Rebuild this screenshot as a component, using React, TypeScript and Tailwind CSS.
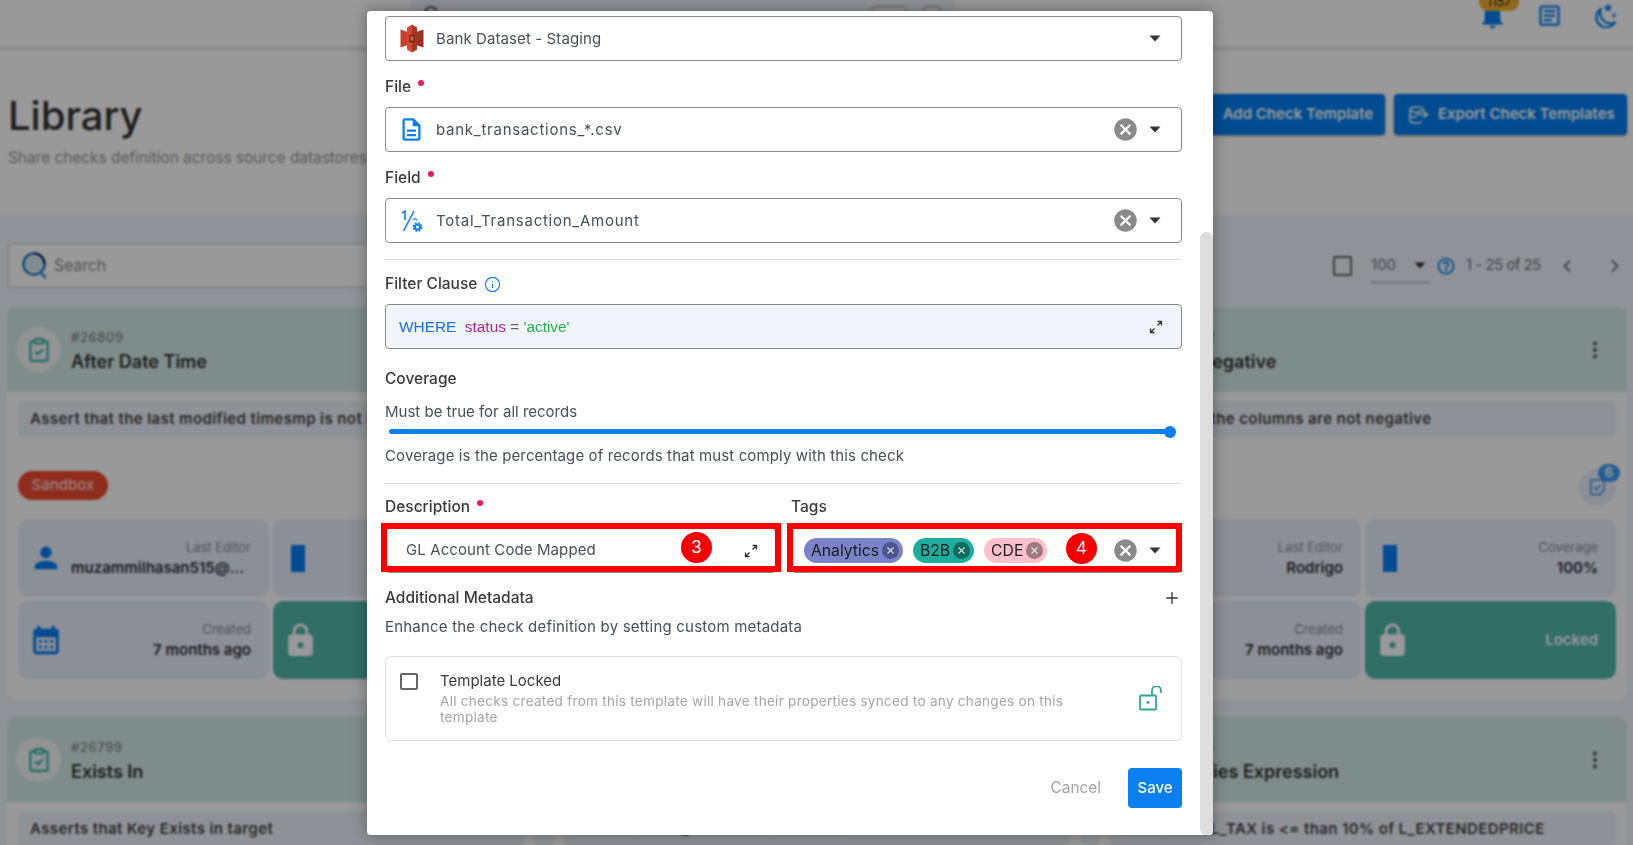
import React from "react";
import { ClipboardCheck, ChevronLeft, ChevronRight, Info, Plus, EllipsisVertical, X } from "lucide-react";
import { MdPerson, MdCalendarMonth, MdLock, MdNotifications, MdOutlineArticle, MdHelpOutline, MdCancel, MdOutlineDescription } from "react-icons/md";

function Caret({ className = "" }: { className?: string }) {
  return (
    <svg width="12" height="7" viewBox="0 0 12 7" className={className}>
      <polygon points="0.5,0.5 11.5,0.5 6,6.5" fill="currentColor" />
    </svg>
  );
}

function ExpandIcon() {
  return (
    <svg width="14" height="14" viewBox="0 0 14 14" fill="none" stroke="#333" strokeWidth="1.3">
      <path d="M8.5 1.5H12.5V5.5M12.5 1.5L8.5 5.5" />
      <path d="M5.5 12.5H1.5V8.5M1.5 12.5L5.5 8.5" />
    </svg>
  );
}

function S3Icon() {
  return (
    <svg width="24" height="29" viewBox="0 0 24 29">
      <polygon points="0.5,5.5 8,8 8,21 0.5,23.5" fill="#c8402c" />
      <polygon points="23.5,5.5 16,8 16,21 23.5,23.5" fill="#9c3322" />
      <polygon points="12,0.5 7,3.5 7,25.5 12,28.5" fill="#d44a32" />
      <polygon points="12,0.5 17,3.5 17,25.5 12,28.5" fill="#a9361f" />
      <polygon points="9,10.5 15,10.5 15,18.5 9,18.5" fill="#7a2a1a" />
      <polygon points="10.5,12.5 13.5,12.5 13.5,16.5 10.5,16.5" fill="#e05a40" />
    </svg>
  );
}

function FieldIcon() {
  return (
    <svg width="22" height="22" viewBox="0 0 22 22" fill="none" stroke="#0a7ff0" strokeWidth="1.6">
      <path d="M1 3.2L4 1.2V10" />
      <path d="M13 1L2.5 21" />
      <path d="M12 9.5C13 8.5 15.5 8.5 16 10.5" strokeWidth="1.2" />
      <circle cx="16.5" cy="17" r="2.6" strokeWidth="2" />
      <circle cx="16.5" cy="17" r="4.2" strokeWidth="1.4" strokeDasharray="2 1.3" />
    </svg>
  );
}

function MoonIcon() {
  return (
    <svg width="26" height="26" viewBox="0 0 26 26" fill="none">
      <path d="M9 7A10 10 0 1 0 23 20.5A10.5 10.5 0 0 1 9 7Z" stroke="#007df2" strokeWidth="2.2" strokeLinejoin="round" />
      <polygon points="16,1 17.2,4.3 20.6,4.4 17.9,6.5 18.8,9.8 16,7.9 13.2,9.8 14.1,6.5 11.4,4.4 14.8,4.3" fill="#007df2" />
      <polygon points="22,10.5 22.7,12.4 24.7,12.5 23.1,13.7 23.7,15.6 22,14.5 20.3,15.6 20.9,13.7 19.3,12.5 21.3,12.4" fill="#007df2" />
    </svg>
  );
}

function ExportIcon() {
  return (
    <svg width="20" height="18" viewBox="0 0 20 18" fill="none" stroke="white" strokeWidth="1.6">
      <ellipse cx="7.5" cy="3.5" rx="6.5" ry="2.5" />
      <path d="M1 3.5V14.5C1 16 4 17 7.5 17C10 17 12 16.5 13 15.5" />
      <path d="M1 9C1 10.5 4 11.5 7.5 11.5" />
      <path d="M6 8.5H18M14.5 5L18.5 8.5L14.5 12" />
    </svg>
  );
}

function SearchLogo() {
  return (
    <svg width="26" height="27" viewBox="0 0 26 27" fill="none">
      <circle cx="12" cy="12" r="7.5" fill="#d5e6f5" />
      <path d="M12 1.5A10.5 10.5 0 0 1 22.5 12" stroke="#062f5e" strokeWidth="2.6" />
      <path d="M22.5 12A10.5 10.5 0 1 1 12 1.5" stroke="#1f7ccc" strokeWidth="2.6" />
      <path d="M18 20L23 25" stroke="#4a97d8" strokeWidth="3" strokeLinecap="round" />
    </svg>
  );
}

function Tile({ icon, label, value }: { icon: React.ReactNode; label: string; value: string }) {
  return (
    <div className="h-[78px] min-w-0 rounded-[10px] bg-[#e8effb] pl-[13px] pr-[18px] flex items-center justify-between gap-[8px]">
      <div className="shrink-0 flex items-center">{icon}</div>
      <div className="min-w-0 text-right">
        <div className="text-[13px] leading-[20px] text-[#8b8f96]">{label}</div>
        <div className="text-[15px] leading-[22px] font-semibold text-[#333] truncate">{value}</div>
      </div>
    </div>
  );
}

const coverageIcon = <div className="w-[14px] h-[27px] bg-[#007df2] ml-[5px]" />;

function Card({ id, title, desc, editor, sandbox, badge }: { id: string; title: string; desc: string; editor: string; sandbox?: boolean; badge?: boolean }) {
  return (
    <div className="h-[392px] rounded-[8px] bg-white overflow-hidden">
      <div className="h-[85px] bg-[#d3ebe6] pl-[9px] pr-[21px] flex items-center">
        <div className="w-[45px] h-[45px] rounded-full bg-[#f4f6f5] flex items-center justify-center">
          <ClipboardCheck size={26} strokeWidth={2} className="text-[#2bb5a0]" />
        </div>
        <div className="ml-[10px] pt-[3px] flex-1">
          <div className="text-[13px] leading-[18px] tracking-[0.7px] text-[#777]">{id}</div>
          <div className="mt-[3px] text-[18px] leading-[26px] font-semibold text-[#333]">{title}</div>
        </div>
        <EllipsisVertical size={22} strokeWidth={2.4} className="text-[#555]" />
      </div>
      <div className="px-[11px]">
        <div className="mt-[9px] h-[37px] rounded-[6px] bg-[#eef3f8] pl-3 flex items-center text-[15px] tracking-[0.4px] font-semibold text-[#444] truncate">{desc}</div>
        <div className="mt-[31px] h-[37px] flex items-center justify-between">
          {sandbox ? (
            <div className="mt-[-4px] w-[90px] h-[29px] rounded-full bg-[#f04a30] text-[#ffd9d4] text-[15px] font-medium flex items-center justify-center">Sandbox</div>
          ) : <div />}
          {badge && (
            <div className="relative w-[37px] h-[37px] rounded-full bg-[#e8effb] flex items-center justify-center">
              <svg width="17" height="17" viewBox="0 0 17 17" fill="none" stroke="#2f8fe8" strokeWidth="1.5">
                <path d="M2 1H15V11L11 15.5H2Z" />
                <path d="M5 8L7.5 10.5L11.5 6" />
              </svg>
              <div className="absolute -top-[5px] -right-1 w-[22px] h-[18px] rounded-full bg-[#3c9ff5] text-white text-[13px] font-semibold flex items-center justify-center">6</div>
            </div>
          )}
        </div>
        <div className="mt-[13px] grid grid-cols-2 gap-1">
          <Tile icon={<MdPerson size={34} className="text-[#007df2] -ml-[2px]" />} label="Last Editor" value={editor} />
          <Tile icon={coverageIcon} label="Coverage" value="100%" />
          <Tile icon={<MdCalendarMonth size={34} className="text-[#007df2] -ml-[2px]" />} label="Created" value="7 months ago" />
          <div className="h-[78px] rounded-[10px] bg-[#52b8a8] pl-[9px] pr-[18px] flex items-center justify-between">
            <MdLock size={37} className="text-white" />
            <span className="text-[15px] font-semibold text-white">Locked</span>
          </div>
        </div>
      </div>
    </div>
  );
}

function Label({ children, required }: { children: React.ReactNode; required?: boolean }) {
  return (
    <div className="h-[22px] leading-[22px] text-[15.5px] font-medium text-[#3a3a3a] flex items-start">
      <span>{children}</span>
      {required && <span className="ml-[7px] mt-[4px] w-[6px] h-[6px] rounded-full bg-[#ec1a5e]" />}
    </div>
  );
}

function Select({ icon, value, clearable = true, tracking = "" }: { icon: React.ReactNode; value: string; clearable?: boolean; tracking?: string }) {
  return (
    <div className="h-[45px] rounded-[4px] border border-[#8a8a8a] pl-3 pr-[20px] flex items-center">
      <div className="w-[27px] flex items-center justify-center mr-[11px]">{icon}</div>
      <span className={`flex-1 pt-[1px] text-[15px] text-[#47505a] ${tracking}`}>{value}</span>
      {clearable && <MdCancel size={27} className="text-[#8a8a8a] mr-[10px]" />}
      <Caret className="text-[#333]" />
    </div>
  );
}

function Chip({ label, bg, dot }: { label: string; bg: string; dot: string }) {
  return (
    <div className={`h-[25px] rounded-full pl-[7px] pr-1 flex items-center gap-[3px] ${bg}`}>
      <span className="text-[15.7px] text-[#1c1c1c]">{label}</span>
      <span className={`w-[17px] h-[17px] rounded-full flex items-center justify-center ${dot}`}>
        <X size={11} strokeWidth={2.4} className="text-white/80" />
      </span>
    </div>
  );
}

function Marker({ n }: { n: number }) {
  return (
    <div className="w-[31px] h-[31px] rounded-full bg-[#f50000] text-white text-[18px] font-['Liberation_Sans',sans-serif] flex items-center justify-center">{n}</div>
  );
}

export default function App() {
  return (
    <div className="relative h-screen w-full overflow-hidden bg-white font-['Inter',sans-serif]">
      {/* page behind the dialog */}
      <header className="relative h-[47px] bg-white shadow-[0_1px_4px_rgba(0,0,0,0.25)] flex items-start">
        <div className="ml-[411px] w-[544px] h-[39px] bg-[#eef4f8] pl-[13px] pr-[14px] pt-[6px] flex items-start">
          <div className="w-[14px] h-[14px] rounded-full border-2 border-[#555]" />
          <span className="ml-[17px] mt-[4px] text-[14px] leading-[18px] text-[#777]">Search datastores, containers and fields</span>
          <div className="ml-auto w-[36px] h-[20px] rounded-[4px] border border-[#999]" />
          <div className="ml-[16px] w-[18px] h-[20px] rounded-[4px] border border-[#999]" />
        </div>
        <div className="ml-auto mr-[15px] h-[47px] flex items-start">
          <div className="relative w-[40px] flex justify-start">
            <MdNotifications size={31} className="text-[#007df2] -ml-[2px]" />
            <div className="absolute -top-[8px] left-0 w-[40px] h-[19px] rounded-[9px] bg-[#f0b030] text-[#222] text-[12px] leading-[19px] text-center">1157</div>
          </div>
          <MdOutlineArticle size={27} className="text-[#007df2] ml-[17px] mt-[2px]" />
          <div className="ml-[29px] mt-[2px]"><MoonIcon /></div>
        </div>
      </header>

      <div className="h-[168px] pl-2 pr-[6px] flex justify-between">
        <div>
          <div className="mt-[45px] text-[40px] leading-[48px] font-medium text-[#333]">Library</div>
          <div className="mt-[8px] text-[15.4px] leading-5 text-[#9a9a9a]">Share checks definition across source datastores</div>
        </div>
        <div className="pt-[47px] flex gap-[9px]">
          <button className="h-[41px] px-3 rounded-[4px] bg-[#007df2] text-white text-[15px] font-semibold shadow-[0_1px_3px_rgba(0,0,0,0.4)]">Add Check Template</button>
          <button className="h-[41px] w-[233px] pl-[15px] rounded-[4px] bg-[#007df2] text-white text-[15px] font-semibold flex items-center gap-[9px] shadow-[0_1px_3px_rgba(0,0,0,0.4)]">
            <ExportIcon />
            Export Check Templates
          </button>
        </div>
      </div>

      <main className="h-[630px] bg-[#eef5fb] pl-[7px] pr-[6px] pt-[28px]">
        <div className="h-[45px] flex items-center">
          <div className="ml-px w-[1200px] h-[45px] rounded-[4px] border border-[#c8ccd0] bg-white pl-[13px] flex items-center gap-[6px]">
            <SearchLogo />
            <span className="pt-[1px] text-[15.7px] text-[#8c8c8c]">Search</span>
          </div>
          <div className="ml-auto flex items-center">
            <div className="w-[19px] h-[20px] rounded-[2px] border-2 border-[#666]" />
            <div className="relative ml-[19px] w-[60px] h-[45px] flex items-center justify-between pr-[5px] text-[15px] text-[#777]">
              <span>100</span>
              <Caret className="text-[#333]" />
              <div className="absolute left-0 right-0 top-[39px] h-px bg-[#999]" />
            </div>
            <MdHelpOutline size={20} className="ml-[5px] text-[#007df2]" />
            <span className="ml-[10px] text-[15px] tracking-[-0.5px] text-[#777]">1 - 25 of 25</span>
            <ChevronLeft size={20} strokeWidth={2} className="ml-[16px] text-[#555]" />
            <ChevronRight size={20} strokeWidth={2} className="ml-[28px] mr-[2px] text-[#555]" />
          </div>
        </div>

        <div className="mt-[19px] grid grid-cols-3 gap-[18px]">
          <Card id="#26809" title="After Date Time" desc="Assert that the last modified timesmp is not in the past" editor="muzammilhasan515@gmail.com" sandbox />
          <Card id="#26807" title="Between" desc="Assert that the value is between the limits" editor="Rodrigo" />
          <Card id="#26802" title="Not Negative" desc="Assert that the columns are not negative" editor="Rodrigo" badge />
          <Card id="#26799" title="Exists In" desc="Asserts that Key Exists in target" editor="Rodrigo" />
          <Card id="#26797" title="Not Null" desc="Asserts that L_ORDERKEY is not null" editor="Rodrigo" />
          <Card id="#26795" title="Satisfies Expression" desc="Assert that L_TAX is <= than 10% of L_EXTENDEDPRICE" editor="Rodrigo" />
        </div>
      </main>

      {/* dialog backdrop */}
      <div className="absolute inset-0 bg-black/40 backdrop-blur-[1px]" />

      {/* dialog */}
      <div className="absolute left-[367px] top-[11px] w-[846px] h-[824px] rounded-[4px] bg-white overflow-hidden shadow-[0_0_16px_rgba(0,0,0,0.35)] pl-[18px] pr-[31px] pt-[5px]">
        <Select icon={<S3Icon />} value="Bank Dataset - Staging" clearable={false} tracking="tracking-[0.1px]" />

        <div className="mt-[15px] mb-[9px]"><Label required>File</Label></div>
        <Select icon={<MdOutlineDescription size={27} className="text-[#0a7ff0]" />} value="bank_transactions_*.csv" tracking="tracking-[0.75px]" />

        <div className="mt-[15px] mb-[9px]"><Label required>Field</Label></div>
        <Select icon={<FieldIcon />} value="Total_Transaction_Amount" tracking="tracking-[0.75px]" />

        <div className="mt-[16px] h-px bg-[#dedede]" />

        <div className="mt-[13px] mb-[9px] flex items-center gap-[7px]">
          <Label>Filter Clause</Label>
          <Info size={17} strokeWidth={1.6} className="text-[#0a7ff0]" />
        </div>
        <div className="h-[45px] rounded-[4px] border border-[#8a8a8a] bg-[#f0f5fa] pl-[13px] pr-[18px] flex items-center justify-between">
          <span className="pt-[1px] whitespace-pre text-[15.4px] font-['Liberation_Sans',sans-serif]">
            <span className="text-[#1a6fe8]">WHERE  </span>
            <span className="text-[#a626a4]">status</span>
            <span className="text-[#666]"> = </span>
            <span className="text-[#22b04a]">'active'</span>
          </span>
          <ExpandIcon />
        </div>

        <div className="mt-[19px]"><Label>Coverage</Label></div>
        <div className="mt-[11px] h-[22px] leading-[22px] text-[15px] text-[#47505a]">Must be true for all records</div>
        <div className="mt-[6px] relative h-[6px] ml-[4px] mr-[7px]">
          <div className="h-[5px] rounded-full bg-[#0a7ff0]" />
          <div className="absolute -right-[1px] -top-[3.5px] w-3 h-3 rounded-full bg-[#0a7ff0]" />
        </div>
        <div className="mt-[10px] h-[22px] leading-[22px] text-[15px] tracking-[0.12px] text-[#47505a]">Coverage is the percentage of records that must comply with this check</div>

        <div className="mt-[16px] h-px bg-[#dedede]" />

        <div className="mt-[12px] grid grid-cols-2 gap-[15px]">
          <div>
            <div className="mb-[10px]"><Label required>Description</Label></div>
            <div className="relative h-[45px] rounded-[4px] border border-[#8a8a8a] pl-5 pr-[17px] flex items-center justify-between">
              <span className="text-[15px] tracking-[0.1px] text-[#47505a]">GL Account Code Mapped</span>
              <ExpandIcon />
              <div className="absolute -left-[5px] -right-[6px] -top-[6px] bottom-0 border-[6px] border-[#ff0000]" />
              <div className="absolute left-[295px] top-[3px]"><Marker n={3} /></div>
            </div>
          </div>
          <div>
            <div className="mb-[10px]"><Label>Tags</Label></div>
            <div className="relative h-[45px] rounded-[4px] border border-[#8a8a8a] pl-3 pr-[20px] flex items-center">
              <div className="flex items-center gap-[10px]">
                <Chip label="Analytics" bg="bg-[#7b84c8]" dot="bg-[#4d5590]" />
                <Chip label="B2B" bg="bg-[#1fae9e]" dot="bg-[#12695f]" />
                <Chip label="CDE" bg="bg-[#ffc0cb]" dot="bg-[#9c7a80]" />
              </div>
              <div className="ml-auto flex items-center">
                <MdCancel size={27} className="text-[#8a8a8a] mr-[10px]" />
                <Caret className="text-[#333]" />
              </div>
              <div className="absolute -left-[5px] -right-[1px] -top-[6px] bottom-0 border-[6px] border-[#ff0000]" />
              <div className="absolute left-[274px] top-[4px]"><Marker n={4} /></div>
            </div>
          </div>
        </div>

        <div className="mt-[14px] flex items-center justify-between pr-[1px]">
          <Label>Additional Metadata</Label>
          <Plus size={18} strokeWidth={1.8} className="text-[#333]" />
        </div>
        <div className="mt-[7px] h-[22px] leading-[22px] text-[15px] tracking-[0.2px] text-[#47505a]">Enhance the check definition by setting custom metadata</div>

        <div className="mt-[18px] h-[85px] rounded-[6px] border border-[#e2e2e2] pl-[14px] pr-[17px] flex items-start">
          <div className="mt-[16px] w-[18px] h-[17px] rounded-[2px] border-2 border-[#666] shrink-0" />
          <div className="ml-[22px] mt-[13px] flex-1 min-w-0">
            <div className="h-[22px] leading-[22px] text-[15px] text-[#3a3a3a]">Template Locked</div>
            <div className="mt-[1px] text-[13.6px] leading-[16px] tracking-[0.25px] text-[#a5a5a5] w-[660px]">All checks created from this template will have their properties synced to any changes on this template</div>
          </div>
          <svg width="25" height="25" viewBox="0 0 25 25" fill="none" stroke="#2aa89a" strokeWidth="1.8" className="mt-[29px] shrink-0">
            <rect x="1" y="9.5" width="16" height="14" rx="1" />
            <circle cx="9" cy="16.5" r="1.4" fill="#2aa89a" stroke="none" />
            <path d="M13 9.5V4.5A4.5 4.5 0 0 1 22 4.5V7" />
          </svg>
        </div>

        <div className="mt-[27px] flex items-center justify-end gap-[27px]">
          <span className="text-[15.4px] text-[#a3a3a3]">Cancel</span>
          <button className="w-[54px] h-[40px] rounded-[4px] bg-[#0a7ff0] text-white text-[15px] font-medium">Save</button>
        </div>

        <div className="absolute right-0 top-[221px] bottom-0 w-[13px] rounded-[6px] bg-[#dddddd]" />
      </div>
    </div>
  );
}
